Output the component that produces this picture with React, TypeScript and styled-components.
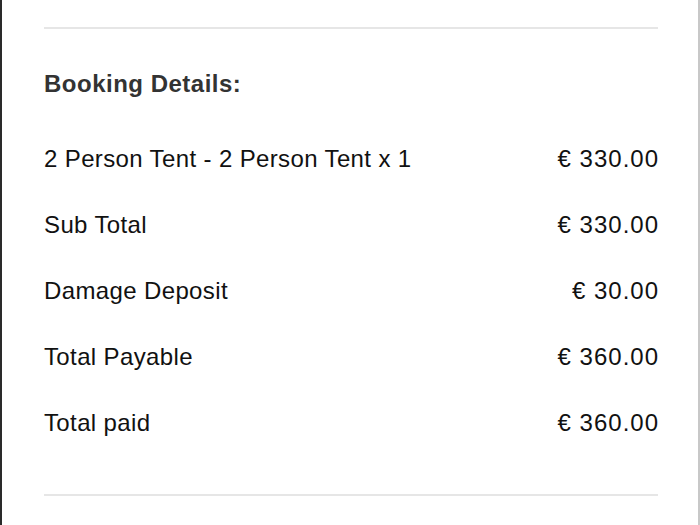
import React from 'react';
import styled, { createGlobalStyle } from 'styled-components';

const GlobalStyle = createGlobalStyle`
  html, body {
    margin: 0;
    padding: 0;
    background: #fff;
  }
  body {
    font-family: 'Liberation Sans', Arial, Helvetica, sans-serif;
  }
`;

const Frame = styled.div`
  box-sizing: border-box;
  width: 700px;
  height: 525px;
  overflow: hidden;
  border-left: 2px solid #2a2a2a;
  border-right: 2px solid #c8c8c8;
  padding: 27px 40px 0 42px;
  background: #fff;
`;

const Divider = styled.div<{ gap: number }>`
  height: 2px;
  background: #e6e6e6;
  margin-bottom: ${p => p.gap}px;
`;

const Heading = styled.h3`
  margin: 0 0 9px;
  height: 66px;
  line-height: 66px;
  font-size: 24px;
  font-weight: 700;
  letter-spacing: 0.5px;
  color: #333;
`;

const Row = styled.div`
  display: flex;
  justify-content: space-between;
  align-items: center;
  height: 66px;
  font-size: 24px;
  letter-spacing: 0.37px;
  color: #111;
`;

const Amount = styled.span`
  text-align: right;
  letter-spacing: 1px;
  margin-right: -1px;
`;

const lines = [
  { label: '2 Person Tent - 2 Person Tent x 1', value: '€ 330.00' },
  { label: 'Sub Total', value: '€ 330.00' },
  { label: 'Damage Deposit', value: '€ 30.00' },
  { label: 'Total Payable', value: '€ 360.00' },
  { label: 'Total paid', value: '€ 360.00' }
];

export default function App() {
  return (
    <>
      <GlobalStyle />
      <Frame>
        <Divider gap={22} />
        <Heading>Booking Details:</Heading>
        {lines.map(line => (
          <Row key={line.label}>
            <span>{line.label}</span>
            <Amount>{line.value}</Amount>
          </Row>
        ))}
        <Divider gap={0} style={{ marginTop: 38 }} />
      </Frame>
    </>
  );
}
